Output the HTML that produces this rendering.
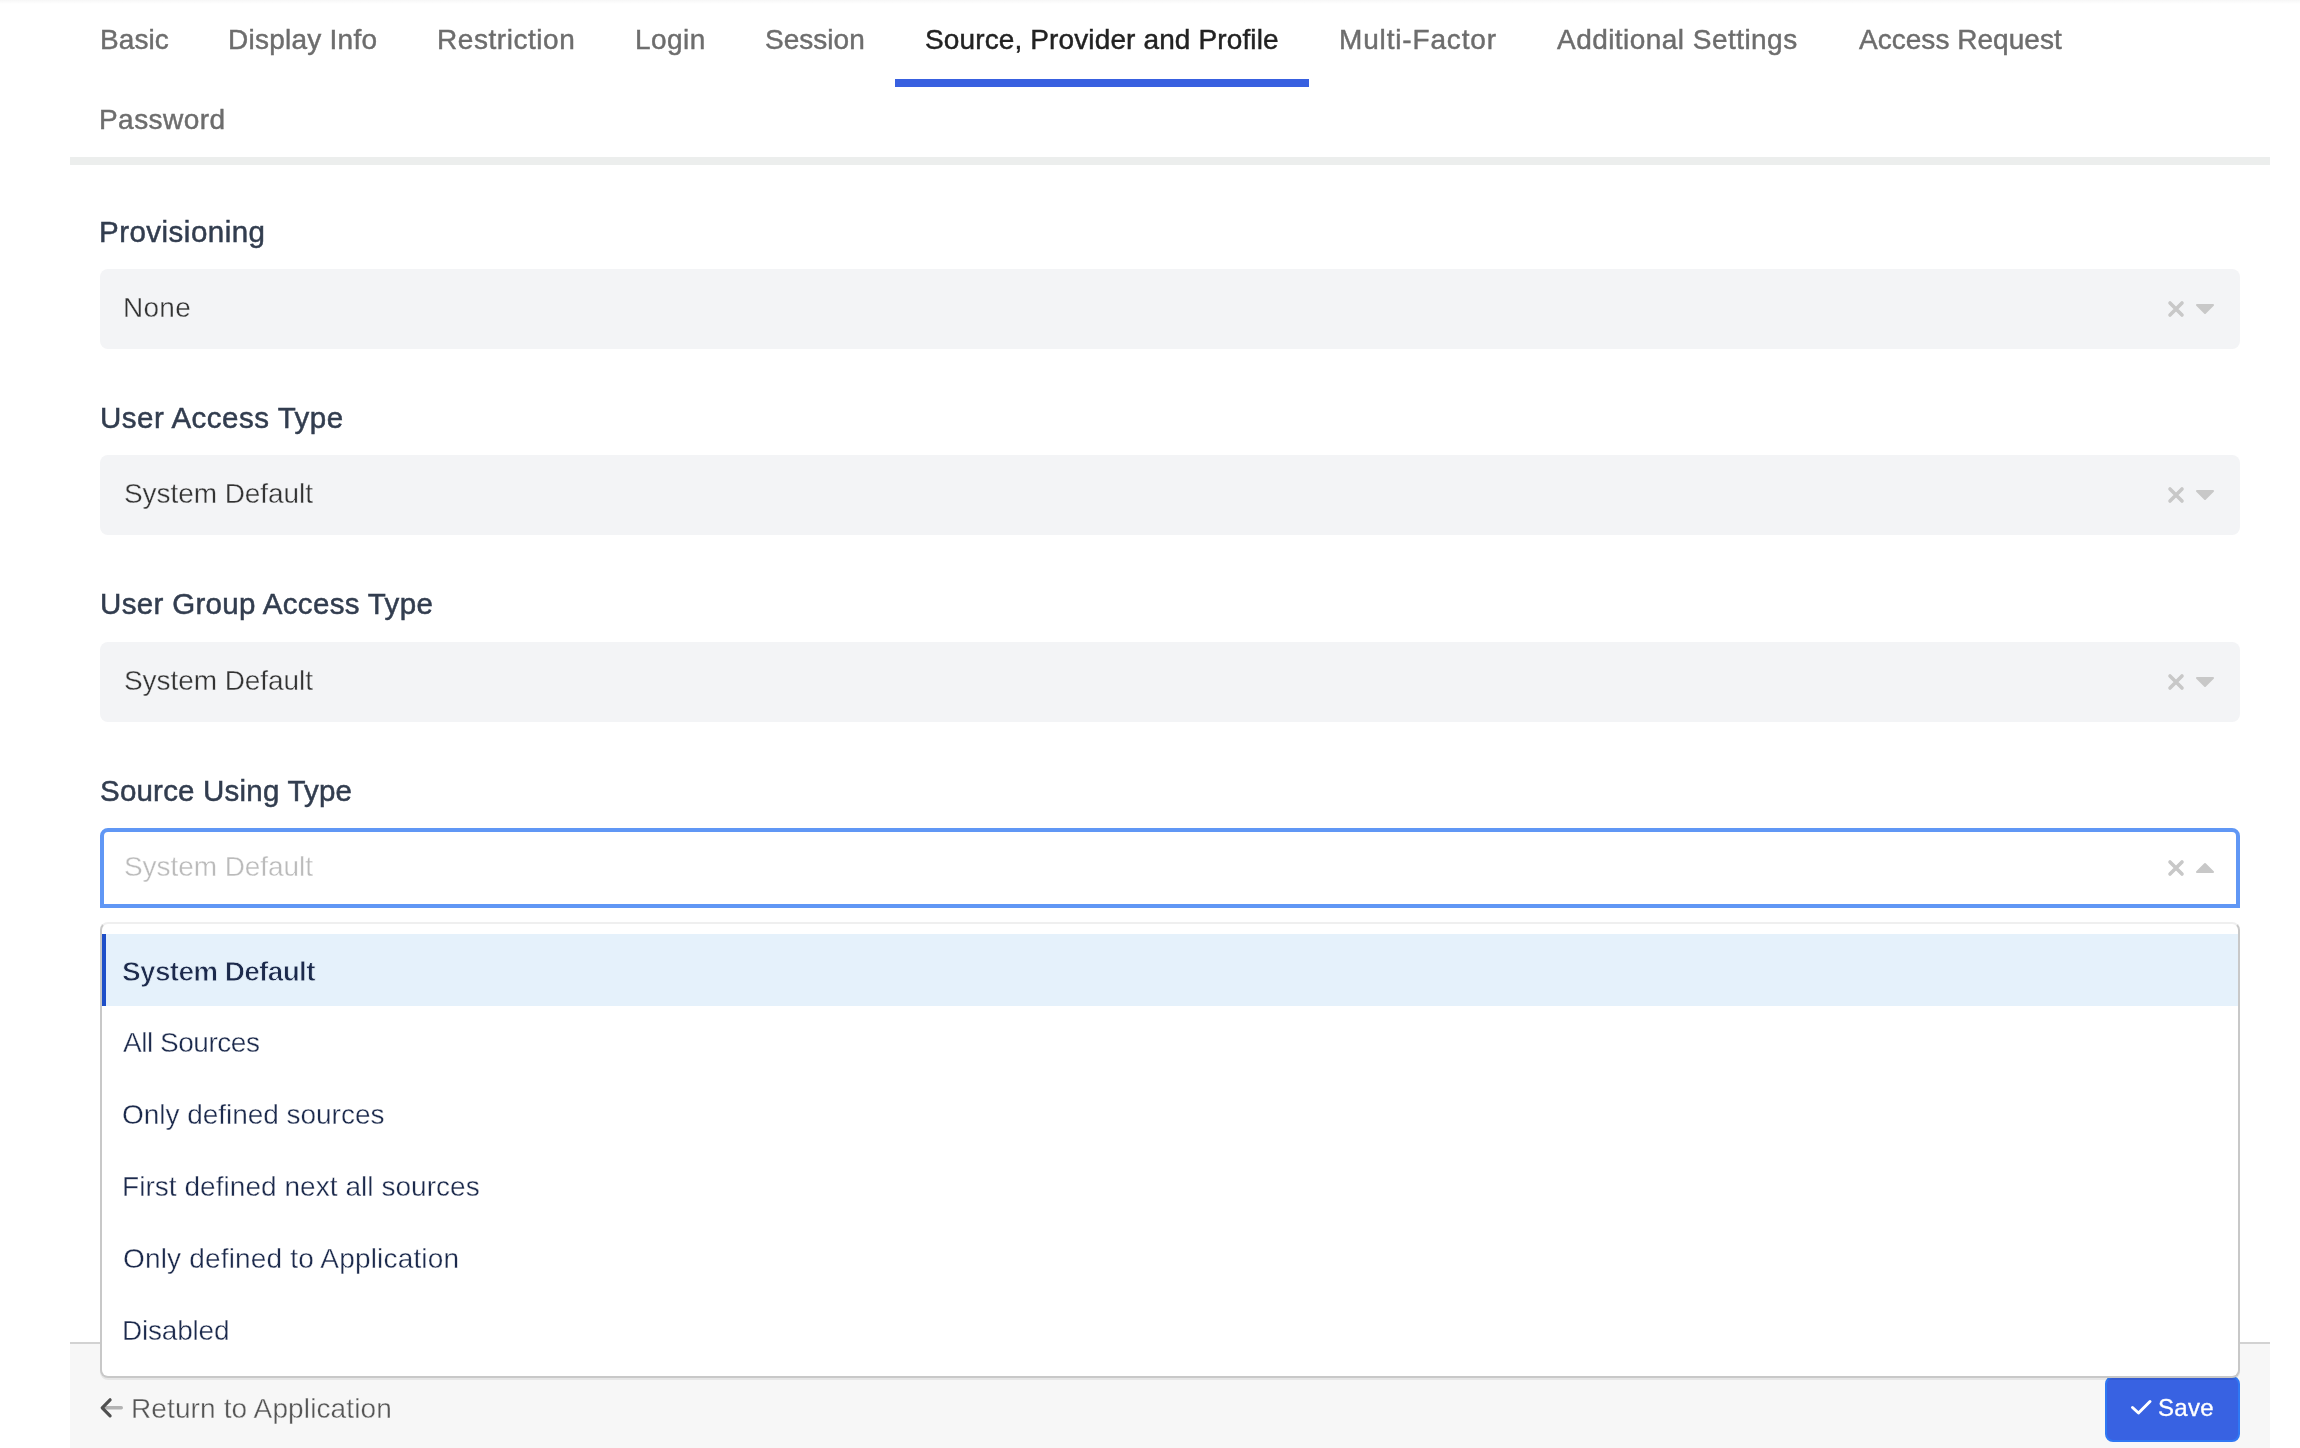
<!DOCTYPE html>
<html><head><meta charset="utf-8">
<style>
html,body{margin:0;padding:0;}
body{width:2300px;height:1448px;overflow:hidden;position:relative;background:#fff;font-family:"Liberation Sans",sans-serif;}
.a{position:absolute;}
.t{position:absolute;white-space:nowrap;line-height:40px;height:40px;font-size:28px;will-change:transform;}
.topsh{left:0;top:0;width:2300px;height:4px;background:linear-gradient(#f6f6f6,#fafafa 40%,#fdfdfd 75%,#fff);}
.tab{color:#6d6d6d;-webkit-text-stroke:0.45px #6d6d6d;}
.tab.on{color:#222;-webkit-text-stroke:0.45px #222;}
.uline{left:895px;top:79px;width:414px;height:8px;background:#3860e0;}
.sep{left:70px;top:157px;width:2200px;height:8px;background:#eceeed;}
.lbl{color:#323d4f;-webkit-text-stroke:0.5px #323d4f;}
.box{left:100px;width:2140px;height:80px;background:#f3f4f6;border-radius:8px;}
.val{color:#333;-webkit-text-stroke:0.35px #f3f4f6;}
.ph{color:#bbb;-webkit-text-stroke:0.35px #fff;}
.focus{left:100px;top:828px;width:2132px;height:72px;border:4px solid #6097f5;border-radius:8px 8px 0 0;background:#fff;}
.menu{left:100px;top:922px;width:2136px;height:452px;background:#fff;border:2px solid #c8c8c8;border-top-color:#efefef;border-radius:8px;box-shadow:0 2px 0 rgba(0,0,0,0.065);}
.hl{left:106px;top:934px;width:2132px;height:72px;background:#e5f1fb;}
.bar{left:102px;top:934px;width:4px;height:72px;background:#1f4fc8;}
.opt{color:#1c2a4c;-webkit-text-stroke:0.35px #fff;}
.opt.b{font-weight:bold;-webkit-text-stroke:0.8px #e5f1fb;}
.ret{color:#555;-webkit-text-stroke:0.35px #f7f7f7;}
.footer{left:70px;top:1342px;width:2200px;height:106px;background:#f7f7f7;border-top:2px solid #d2d2d2;box-sizing:border-box;}
.save{left:2105px;top:1376px;width:135px;height:66px;background:#3862e2;border-radius:8px;box-sizing:border-box;border:2px solid #2f78f4;}
.savet{color:#fff;-webkit-text-stroke:0.3px #fff;}
.icons{left:0;top:0;width:2300px;height:1448px;pointer-events:none;}
.textonly .a{display:none;}
.textonly .t{color:#000 !important;}
</style></head>
<body>
<div class="a topsh"></div>
<div class="a uline"></div>
<div class="a sep"></div>
<div class="a box" style="top:269px"></div>
<div class="a box" style="top:455px"></div>
<div class="a box" style="top:642px"></div>
<div class="a focus"></div>
<div class="a footer"></div>
<div class="a save"></div>
<div class="a menu"></div>
<div class="a hl"></div>
<div class="a bar"></div>
<div class="t tab" style="left:99.80px;top:20px;letter-spacing:0.075px">Basic</div>
<div class="t tab" style="left:228.00px;top:20px;letter-spacing:0.245px">Display Info</div>
<div class="t tab" style="left:437.00px;top:20px;letter-spacing:0.550px">Restriction</div>
<div class="t tab" style="left:634.60px;top:20px;letter-spacing:0.450px">Login</div>
<div class="t tab" style="left:765.00px;top:20px;letter-spacing:0.017px">Session</div>
<div class="t tab on" style="left:925.20px;top:20px;letter-spacing:0.126px">Source, Provider and Profile</div>
<div class="t tab" style="left:1338.60px;top:20px;letter-spacing:0.836px">Multi-Factor</div>
<div class="t tab" style="left:1557.00px;top:20px;letter-spacing:0.456px">Additional Settings</div>
<div class="t tab" style="left:1859.00px;top:20px;letter-spacing:0.031px">Access Request</div>
<div class="t tab" style="left:99.00px;top:100px;letter-spacing:0.443px">Password</div>
<div class="t lbl" style="left:99.00px;top:212px;font-size:29.5px;letter-spacing:0.482px">Provisioning</div>
<div class="t val" style="left:122.80px;top:288px;letter-spacing:0.267px">None</div>
<div class="t lbl" style="left:100.00px;top:398px;font-size:29.5px;letter-spacing:0.507px">User Access Type</div>
<div class="t val" style="left:124.40px;top:474px;letter-spacing:-0.062px">System Default</div>
<div class="t lbl" style="left:100.00px;top:584px;font-size:29.5px;letter-spacing:0.338px">User Group Access Type</div>
<div class="t val" style="left:124.40px;top:661px;letter-spacing:-0.062px">System Default</div>
<div class="t lbl" style="left:100.00px;top:771px;font-size:29.5px;letter-spacing:0.206px">Source Using Type</div>
<div class="t ph" style="left:123.80px;top:847px;letter-spacing:-0.062px">System Default</div>
<div class="t opt b" style="left:122.00px;top:952px;letter-spacing:-0.677px">System Default</div>
<div class="t opt" style="left:123.00px;top:1023px;letter-spacing:-0.470px">All Sources</div>
<div class="t opt" style="left:122.40px;top:1095px;letter-spacing:-0.032px">Only defined sources</div>
<div class="t opt" style="left:122.00px;top:1167px;letter-spacing:0.045px">First defined next all sources</div>
<div class="t opt" style="left:123.00px;top:1239px;letter-spacing:0.173px">Only defined to Application</div>
<div class="t opt" style="left:122.00px;top:1311px;letter-spacing:-0.200px">Disabled</div>
<div class="t ret" style="left:130.80px;top:1389px;letter-spacing:0.120px">Return to Application</div>
<div class="t savet" style="left:2158.40px;top:1388px;font-size:24px;letter-spacing:0.267px">Save</div>
<svg class="a icons" width="2300" height="1448" viewBox="0 0 2300 1448">
 <g stroke="#c8c8c8" stroke-width="3.6" stroke-linecap="round" fill="none">
  <path d="M2170 303L2182 315M2182 303L2170 315"/>
  <path d="M2170 489L2182 501M2182 489L2170 501"/>
  <path d="M2170 676L2182 688M2182 676L2170 688"/>
  <path d="M2170 862L2182 874M2182 862L2170 874"/>
 </g>
 <g fill="#c8c8c8" stroke="#c8c8c8" stroke-width="2" stroke-linejoin="round">
  <path d="M2197 305H2213L2205 313Z"/>
  <path d="M2197 491H2213L2205 499Z"/>
  <path d="M2197 678H2213L2205 686Z"/>
  <path d="M2197 872H2213L2205 864Z"/>
 </g>
 <path d="M105 1407.8H121.3" stroke="#b3b3b3" stroke-width="3.4" stroke-linecap="round" fill="none"/>
 <path d="M110.1 1399.8L102.2 1407.8L110.1 1415.8" stroke="#505050" stroke-width="3.2" stroke-linecap="round" stroke-linejoin="round" fill="none"/>
 <path d="M2132.5 1407.5L2138.5 1413L2150 1401.5" stroke="#fff" stroke-width="3" stroke-linecap="round" stroke-linejoin="round" fill="none"/>
</svg>
</body></html>
